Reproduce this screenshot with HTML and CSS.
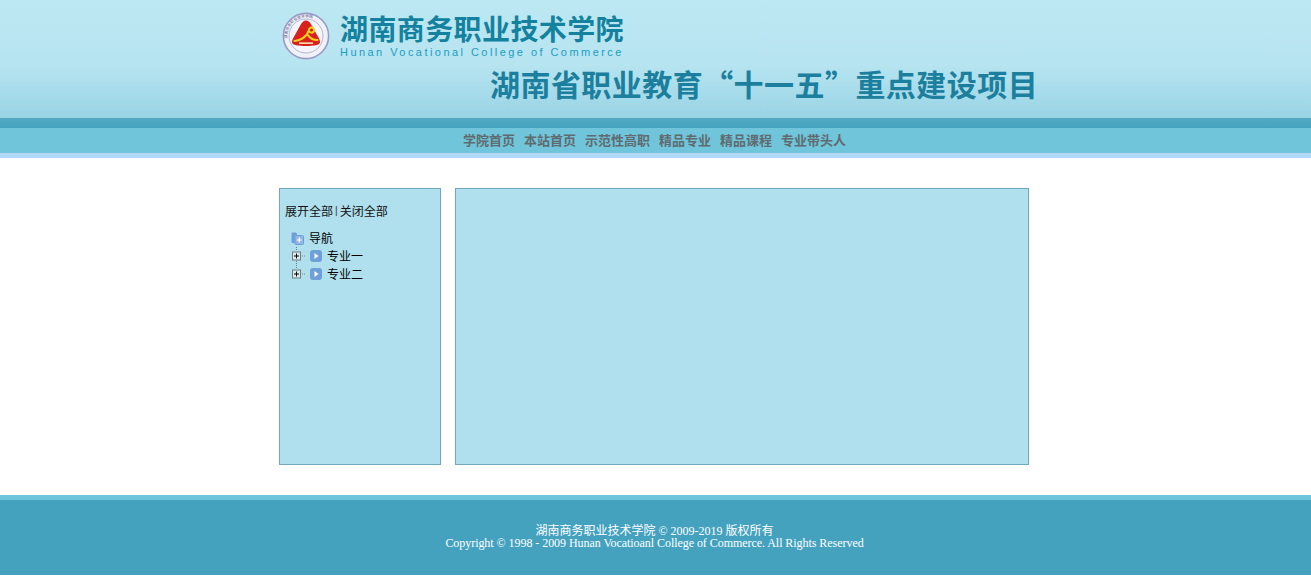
FILE: index.html
```html
<!DOCTYPE html>
<html lang="zh-CN">
<head>
<meta charset="utf-8">
<title>湖南商务职业技术学院</title>
<link rel="stylesheet" href="styles.css">
</head>
<body>
<header class="banner">
  <div class="banner-inner">
    <div class="brand">
      <svg class="crest" width="50" height="50" viewBox="0 0 50 50">
        <defs><path id="ring" d="M25 25 m-18.6 3 a18.8 18.8 0 1 1 37.2 0"/></defs>
        <circle cx="25" cy="25" r="22.6" fill="#f1f2f9" stroke="#9a9ac6" stroke-width="1.6"/>
        <circle cx="25" cy="25" r="17" fill="#f4f5fb" stroke="#a5a5cc" stroke-width=".8"/>
        <text class="crest-text"><textPath href="#ring" startOffset="1%">湖南商务职业技术学院</textPath></text>
        <path d="M25 9.5 C27.5 9.5 28.8 11 30.5 14 L38 27.5 C40 31.5 39 33.5 35 34.2 C29 35.2 21 35.2 15 34.2 C11 33.5 10 31.5 12 27.5 L19.5 14 C21.2 11 22.5 9.5 25 9.5Z" fill="#d9201d"/>
        <path d="M13.5 30 C20 29.5 26 25.5 27.5 20 C28.5 15.5 32 15.5 33 18.5 C33.5 21 31 22.5 28.8 21 M27 24 C29 27.5 32.5 29 36.5 29" fill="none" stroke="#f3d01d" stroke-width="2.1" stroke-linecap="round"/>
        <rect x="18" y="31.3" width="14" height="1.7" fill="#f5d9a2"/>
      </svg>
      <div class="brand-names">
        <div class="brand-cn">湖南商务职业技术学院</div>
        <div class="brand-en">Hunan Vocational College of Commerce</div>
      </div>
    </div>
    <div class="project">湖南省职业教育“十一五”重点建设项目</div>
  </div>
</header>
<div class="band"></div>
<nav class="nav">
  <a href="#">学院首页</a>
  <a href="#">本站首页</a>
  <a href="#">示范性高职</a>
  <a href="#">精品专业</a>
  <a href="#">精品课程</a>
  <a href="#">专业带头人</a>
</nav>
<main class="content">
  <div class="columns">
    <aside class="panel side">
      <div class="tree-tools"><a href="#">展开全部</a><span class="sep">|</span><a href="#">关闭全部</a></div>
      <ul class="tree">
        <li class="tree-row">
          <svg class="tree-icon" width="18" height="18" viewBox="0 0 18 18">
            <path d="M3.5 4.5 a1 1 0 0 1 1-1 h3.5 l1 1.5 v1.5 h-2 v7.5 h-2.5 a1 1 0 0 1-1-1Z" fill="#6f9fd8"/>
            <rect x="7" y="6.5" width="8.5" height="9" rx="1" fill="#8fb6e4" stroke="#6f9fd8"/>
            <path d="M11.2 8.5v5M8.8 11h5" stroke="#fff" stroke-width="1.2"/>
          </svg>
          <span class="root-label">导航</span>
        </li>
        <li class="tree-row">
          <svg class="tree-icon" width="18" height="18" viewBox="0 0 18 18">
            <path d="M8.5 0v4M8.5 14v4M14 9h4" stroke="#6b7f86" stroke-dasharray="1 1"/>
            <rect x="4.5" y="5" width="8" height="8" fill="#d9ecef" stroke="#707a7c"/>
            <path d="M6 9h5M8.5 6.5v5" stroke="#000"/>
          </svg>
          <svg class="tree-icon tree-button" width="18" height="18" viewBox="0 0 18 18">
            <rect x="3" y="3" width="12" height="12" rx="3" fill="#6f9fd8"/>
            <path d="M7.5 6 11.5 9 7.500 12Z" fill="#fff"/>
          </svg>
          <span class="node-label">专业一</span>
        </li>
        <li class="tree-row">
          <svg class="tree-icon" width="18" height="18" viewBox="0 0 18 18">
            <path d="M8.5 0v4M14 9h4" stroke="#6b7f86" stroke-dasharray="1 1"/>
            <rect x="4.5" y="5" width="8" height="8" fill="#d9ecef" stroke="#707a7c"/>
            <path d="M6 9h5M8.5 6.5v5" stroke="#000"/>
          </svg>
          <svg class="tree-icon tree-button" width="18" height="18" viewBox="0 0 18 18">
            <rect x="3" y="3" width="12" height="12" rx="3" fill="#6f9fd8"/>
            <path d="M7.5 6 11.5 9 7.500 12Z" fill="#fff"/>
          </svg>
          <span class="node-label">专业二</span>
        </li>
      </ul>
    </aside>
    <section class="panel main-panel"></section>
  </div>
</main>
<footer class="footer">
  <div class="footer-line">湖南商务职业技术学院 © 2009-2019 版权所有</div>
  <div class="footer-line footer-en">Copyright © 1998 - 2009 Hunan Vocatioanl College of Commerce. All Rights Reserved</div>
</footer>
</body>
</html>
```
FILE: styles.css
```css
* { box-sizing: border-box; }
html, body { margin: 0; padding: 0; background: #fff; }
body {
  font-family: "Liberation Sans", "Noto Sans CJK SC", sans-serif;
  font-size: 12px;
  color: #000;
}
a { color: inherit; text-decoration: none; }

.banner {
  height: 118px;
  background: linear-gradient(#bce8f3 0, #b6e4f0 55%, #99d4e5 100%);
}
.banner-inner {
  width: 753px;
  margin: 0 auto;
  padding: 11px 0 0 0;
}
.brand { display: flex; align-items: flex-start; gap: 9px; height: 55px; margin-left: 2px; }
.crest { flex: none; }
.crest-text { font-family: "Noto Sans CJK SC", sans-serif; font-size: 3.8px; fill: #55558e; }
.brand-names { margin-top: 1px; }
.brand-cn {
  font-family: "Noto Sans CJK SC", sans-serif;
  font-size: 28px;
  font-weight: 700;
  line-height: 33px;
  letter-spacing: 0.4px;
  color: #14829f;
  white-space: nowrap;
}
.brand-en {
  font-size: 11px;
  line-height: 13px;
  margin-top: 1px;
  letter-spacing: 2.45px;
  color: #1b9dc2;
  white-space: nowrap;
}
.project {
  margin-left: 211px;
  font-family: "Noto Sans CJK SC", sans-serif;
  font-size: 30px;
  font-weight: 700;
  line-height: 34px;
  letter-spacing: 0.45px;
  color: #1c7f9d;
  white-space: nowrap;
}

.band { height: 10px; background: linear-gradient(#53a9c3, #45a3bf); }
.nav {
  display: flex;
  justify-content: center;
  align-items: flex-start;
  gap: 9px;
  height: 30px;
  padding: 0 2px 0 0;
  background: #70c5da;
  border-bottom: 5px solid #b3d9f9;
  font-family: "Noto Sans CJK SC", sans-serif;
  font-size: 13px;
  font-weight: 700;
  line-height: 24px;
  color: #5f6b70;
}

.content { padding: 30px 0; }
.columns { width: 753px; margin: 0 auto; display: flex; gap: 14px; }
.panel {
  height: 277px;
  background: #b0e0ed;
  border: 1px solid #72a9ba;
}
.side { width: 162px; padding: 12px 0 0 5px; }
.main-panel { width: 574px; }

.tree-tools {
  display: flex;
  align-items: center;
  height: 18px;
  font-family: "Noto Sans CJK SC", sans-serif;
  font-size: 12px;
  color: #111;
}
.sep { padding: 0 2px; font-family: "Liberation Sans", sans-serif; font-size: 10px; color: #333; }
.tree {
  list-style: none;
  margin: 10px 0 0 3px;
  padding: 0;
  font-family: "Noto Sans CJK SC", sans-serif;
}
.tree-row { display: flex; align-items: center; height: 18px; line-height: 18px; }
.tree-icon { flex: none; display: block; }
.tree-button { margin-left: 1px; }
.root-label { margin-left: 3px; }
.node-label { margin-left: 2px; }

.footer {
  height: 80px;
  padding: 25px 2px 0 0;
  border-top: 5px solid #6fc6da;
  background: #44a2bf;
  color: #fff;
  text-align: center;
  font-family: "Liberation Serif", "Noto Sans CJK SC", serif;
  font-size: 12px;
}
.footer-line { height: 12px; line-height: 12px; white-space: nowrap; }
.footer-en { letter-spacing: -0.05px; }
```
